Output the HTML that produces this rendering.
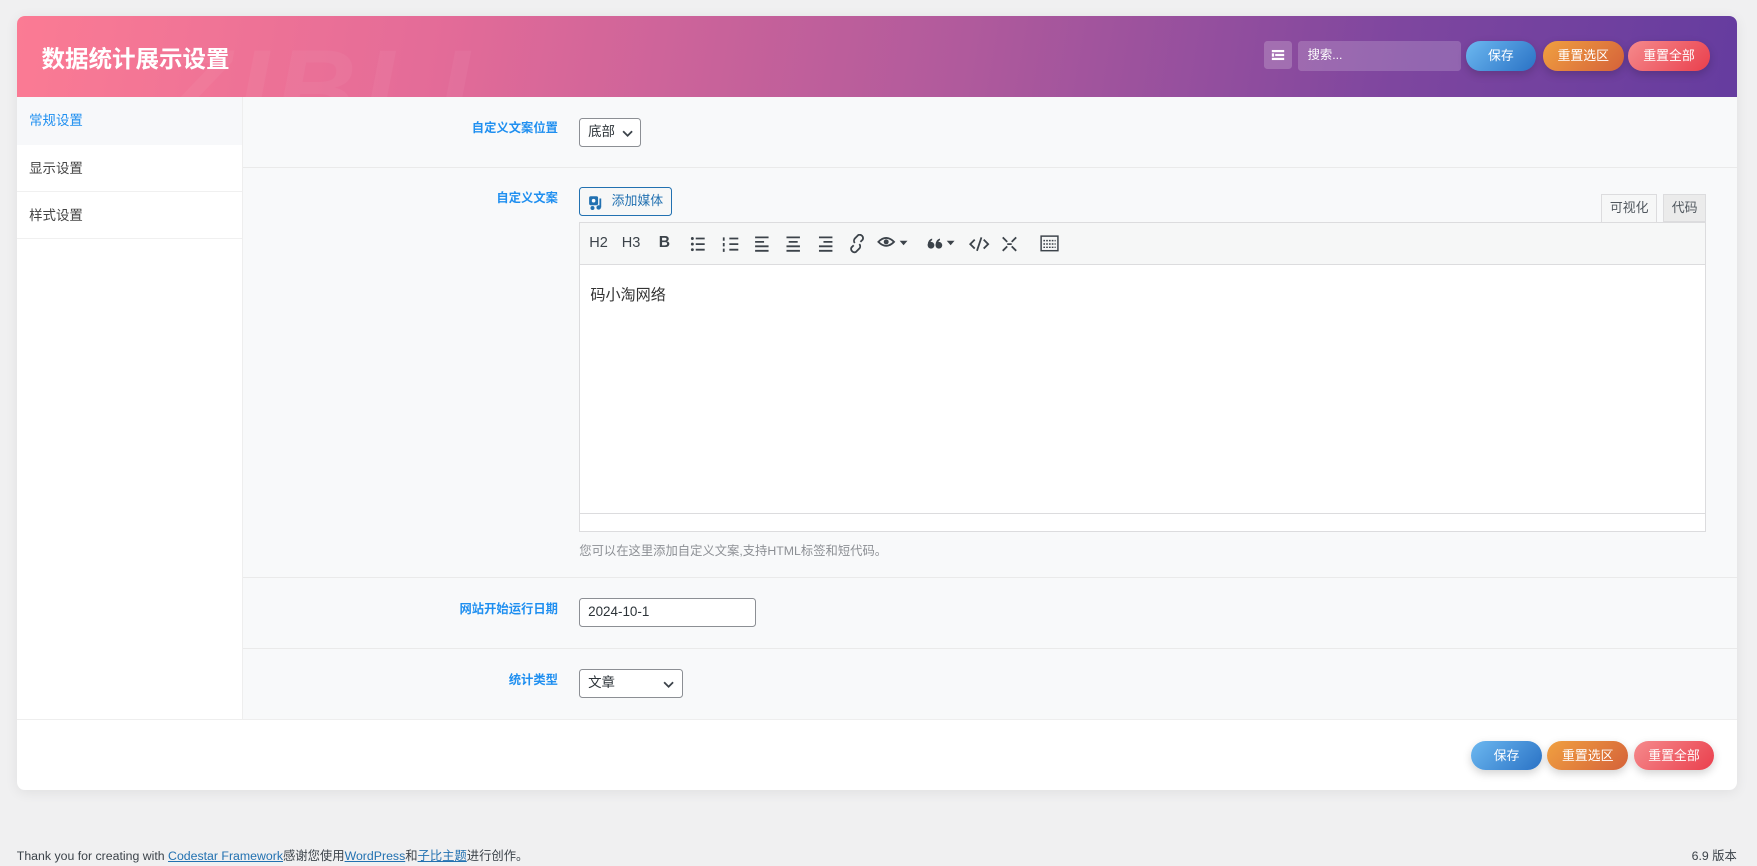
<!DOCTYPE html>
<html><head><meta charset="utf-8">
<style>
html,body{margin:0;padding:0;}
body{width:1757px;height:866px;overflow:hidden;background:#f0f0f1;font-family:"Liberation Sans","Noto Sans CJK SC",sans-serif;}
#w{zoom:1.1205;position:relative;width:1568px;height:773px;}
.a{position:absolute;}
.card{left:15px;top:14px;width:1535px;height:691px;background:#fff;border-radius:7px;box-shadow:0 2px 12px rgba(0,0,0,.07);overflow:hidden;}
.hd{left:0;top:0;width:1535px;height:73px;background:linear-gradient(100deg,#fb7b94 0%,#e36b98 25%,#b05a9c 55%,#7e469f 80%,#653c9f 100%);overflow:hidden;}
.title{left:22px;top:22px;color:#fff;font-size:21px;font-weight:bold;}
.wm{left:130px;top:8px;font-size:100px;font-weight:900;font-style:italic;color:rgba(255,255,255,.045);letter-spacing:6px;}
.btn{height:26px;line-height:26px;border-radius:13px;color:#fff;font-size:11.5px;text-align:center;box-shadow:0 3px 8px rgba(0,0,0,.18);}
.b1{background:linear-gradient(135deg,#6cb8f0,#2a72c5);}
.b2{background:linear-gradient(135deg,#f0a040,#d5623a);}
.b3{background:linear-gradient(135deg,#f58a8c,#ea3f4d);}
.side{left:0;top:73px;width:201px;height:555px;background:#fff;border-right:1px solid #eee;}
.si{left:0;width:201px;height:42px;line-height:42px;padding-left:11px;box-sizing:border-box;font-size:12px;color:#444;border-bottom:1px solid #f0f0f0;}
.cont{left:202px;top:73px;width:1333px;height:555px;background:#f8f9fa;}
.row{left:0;width:1333px;border-bottom:1px solid #eaeaea;}
.lb{right:1052px;font-size:11px;font-weight:bold;color:#1f8ff0;text-align:right;}
.sel{background:#fff;border:1px solid #8c8f94;border-radius:3px;font-size:12px;color:#2c3338;box-sizing:border-box;padding-left:7px;}
.ic{stroke:#3c434a;fill:none;stroke-width:1.6;}
.tb span{position:absolute;top:11px;font-size:13px;color:#3c434a;}
</style></head><body><div id="w">
<div class="a card">
 <div class="a hd">
  <div class="a wm">ZIBLL</div>
  <div class="a title">数据统计展示设置</div>
  <div class="a" style="left:1113px;top:23px;width:25px;height:25px;background:rgba(255,255,255,.2);border-radius:3px;">
   <svg width="25" height="25"><g fill="#fff"><rect x="7" y="8" width="11" height="2"/><rect x="10" y="11.5" width="8" height="2"/><rect x="7" y="11" width="2" height="3"/><rect x="7" y="15" width="11" height="2"/></g></svg>
  </div>
  <div class="a" style="left:1143px;top:23px;width:146px;height:26px;background:rgba(255,255,255,.18);border-radius:3px;color:#fff;font-size:11px;line-height:26px;padding-left:9px;box-sizing:border-box;">搜索...</div>
  <div class="a btn b1" style="left:1293px;top:23px;width:63px;">保存</div>
  <div class="a btn b2" style="left:1362px;top:23px;width:72px;">重置选区</div>
  <div class="a btn b3" style="left:1438px;top:23px;width:73px;">重置全部</div>
 </div>
 <div class="a side">
  <div class="a si" style="top:0;background:#f7f8fa;color:#1f8ff0;border-bottom:none;">常规设置</div>
  <div class="a si" style="top:42px;">显示设置</div>
  <div class="a si" style="top:84px;">样式设置</div>
 </div>
 <div class="a cont">
  <div class="a row" style="top:0;height:62px;">
   <div class="a lb" style="top:18px;">自定义文案位置</div>
   <div class="a sel" style="left:300px;top:18px;width:55px;height:26px;line-height:24px;">底部 <svg width="10" height="8" style="position:absolute;right:6px;top:9px"><path d="M1 2l4 4 4-4" class="ic"/></svg></div>
  </div>
  <div class="a row" style="top:62px;height:366px;">
   <div class="a lb" style="top:19px;">自定义文案</div>
   <div class="a" style="left:300px;top:18px;width:83px;height:26px;box-sizing:border-box;border:1px solid #2271b1;border-radius:3px;background:#f6f7f7;color:#2271b1;font-size:11.5px;line-height:24px;padding-left:28px;">添加媒体
    <svg class="a" style="left:7px;top:5px" width="16" height="15"><rect x="1" y="2" width="8" height="8" rx="1.5" fill="#2271b1"/><circle cx="5" cy="6" r="1.6" fill="#fff"/><path d="M11 4v8" stroke="#2271b1" stroke-width="1.6"/><circle cx="9.5" cy="12" r="2" fill="#2271b1"/><circle cx="4" cy="12.5" r="1.8" fill="#2271b1"/></svg></div>
   <div class="a" style="left:1212px;top:24px;width:50px;height:26px;background:#f6f7f7;border:1px solid #dcdcde;border-bottom:none;font-size:11.5px;color:#50575e;text-align:center;line-height:24px;box-sizing:border-box;">可视化</div>
   <div class="a" style="left:1267px;top:24px;width:39px;height:25px;background:#ebebeb;border:1px solid #dcdcde;font-size:11.5px;color:#50575e;text-align:center;line-height:23px;box-sizing:border-box;">代码</div>
   <div class="a" style="left:300px;top:49px;width:1006px;height:277px;border:1px solid #dcdcde;box-sizing:border-box;background:#fff;">
    <div class="a tb" style="left:0;top:0;width:1004px;height:37px;background:#f6f7f7;border-bottom:1px solid #dcdcde;">
     <span style="left:8px">H2</span><span style="left:37px">H3</span><span style="left:70px;font-weight:bold;font-size:14px;top:10px">B</span>
     <svg class="a" style="left:97px;top:10px" width="300" height="18">
      <g fill="#3c434a"><circle cx="3" cy="4" r="1.3"/><circle cx="3" cy="9" r="1.3"/><circle cx="3" cy="14" r="1.3"/></g>
      <path d="M6 4h8M6 9h8M6 14h8" class="ic" stroke-width="1.1"/>
      <path d="M36 4h8M36 9h8M36 14h8" class="ic" stroke-width="1.1"/><path d="M31 3v3M31 8v3M31 13v3" class="ic" stroke-width="1"/>
      <path d="M59 3h12M59 7h8M59 11h12M59 15h12" class="ic"/>
      <path d="M87 3h12M89 7h8M87 11h12M87 15h12" class="ic"/>
      <path d="M116 3h12M120 7h8M116 11h12M116 15h12" class="ic"/>
      <path d="M147 10l-2 2a3 3 0 0 0 4 4l3-3a3 3 0 0 0 0-4M153 7l2-2a3 3 0 0 0-4-4l-3 3a3 3 0 0 0 0 4" class="ic" stroke-width="1.8"/>
      <path d="M169 7q7-7 14 0q-7 7-14 0z" class="ic" stroke-width="1.4"/><circle cx="176" cy="7" r="2.2" fill="#3c434a"/>
      <path d="M188 6h7l-3.5 4z" fill="#3c434a"/>
      <g fill="#3c434a"><circle cx="216" cy="10" r="3"/><circle cx="223" cy="10" r="3"/><path d="M213 10q0-5 4-6v1.5q-2 1-2 4.5zM220 10q0-5 4-6v1.5q-2 1-2 4.5z"/></g>
      <path d="M230 6h7l-3.5 4z" fill="#3c434a"/>
      <path d="M255 5l-4 4 4 4M263 5l4 4-4 4M261 3l-4 12" class="ic" stroke-width="1.3"/>
      <path d="M280 3l4 4M292 3l-4 4M280 15l4-4M292 15l-4-4M284 9h4" class="ic" stroke-width="1.6"/>
     </svg>
     <svg class="a" style="left:410px;top:11px" width="20" height="16"><rect x="1" y="1" width="15" height="13" fill="none" stroke="#3c434a" stroke-width="1.3"/><path d="M3 5h11M3 8h11M3 11h11" stroke="#3c434a" stroke-width="1.3" stroke-dasharray="1.5 1"/></svg>
    </div>
    <div class="a" style="left:9px;top:54px;font-size:13.5px;color:#333;">码小淘网络</div>
    <div class="a" style="left:0;top:259px;width:1004px;height:16px;border-top:1px solid #dcdcde;"></div>
   </div>
   <div class="a" style="left:300px;top:334px;font-size:11px;color:#8c8f94;">您可以在这里添加自定义文案,支持HTML标签和短代码。</div>
  </div>
  <div class="a row" style="top:428px;height:63px;">
   <div class="a lb" style="top:20px;">网站开始运行日期</div>
   <div class="a sel" style="left:300px;top:19px;width:158px;height:26px;line-height:24px;">2024-10-1</div>
  </div>
  <div class="a" style="left:0;top:491px;height:64px;width:1333px;">
   <div class="a lb" style="top:20px;">统计类型</div>
   <div class="a sel" style="left:300px;top:19px;width:93px;height:26px;line-height:24px;">文章<svg width="10" height="8" style="position:absolute;right:7px;top:9px"><path d="M1 2l4 4 4-4" class="ic"/></svg></div>
  </div>
 </div>
 <div class="a" style="left:0;top:628px;width:1535px;border-top:1px solid #eee;"></div>
 <div class="a btn b1" style="left:1298px;top:647px;width:63px;">保存</div>
 <div class="a btn b2" style="left:1366px;top:647px;width:72px;">重置选区</div>
 <div class="a btn b3" style="left:1443px;top:647px;width:72px;">重置全部</div>
</div>
<div class="a" style="left:15px;top:755px;font-size:11px;color:#3c434a;">Thank you for creating with <u style="color:#2271b1">Codestar Framework</u>感谢您使用<u style="color:#2271b1">WordPress</u>和<u style="color:#2271b1">子比主题</u>进行创作。</div>
<div class="a" style="right:18px;top:755px;font-size:11px;color:#3c434a;">6.9 版本</div>
</div></body></html>
